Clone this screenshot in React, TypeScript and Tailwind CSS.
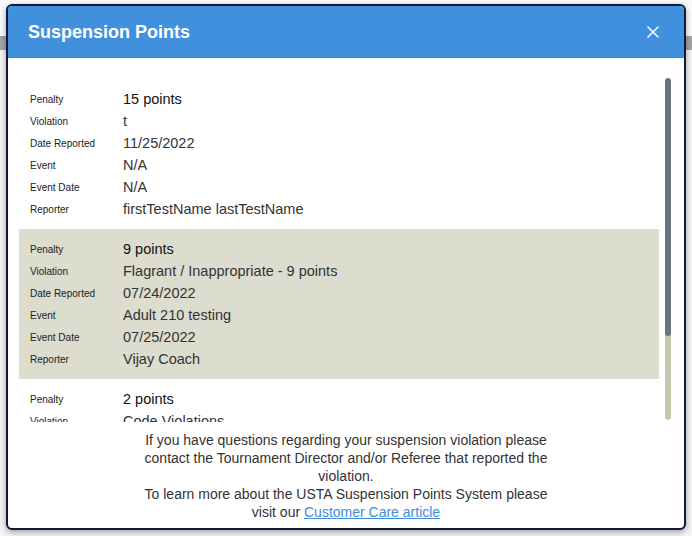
const entries = [
  {
    id: 1,
    penalty: "15 points",
    violation: "t",
    reported: "11/25/2022",
    event: "N/A",
    eventDate: "N/A",
    reporter: "firstTestName lastTestName",
  },
  {
    id: 2,
    penalty: "9 points",
    violation: "Flagrant / Inappropriate - 9 points",
    reported: "07/24/2022",
    event: "Adult 210 testing",
    eventDate: "07/25/2022",
    reporter: "Vijay Coach",
  },
  {
    id: 3,
    penalty: "2 points",
    violation: "Code Violations",
    reported: "05/12/2022",
    event: "N/A",
    eventDate: "N/A",
    reporter: "Vijay Coach",
  },
];

function Row({ label, value, strong }: { label: string; value: string; strong?: boolean }) {
  return (
    <div className="flex h-[22px] items-center pt-[1px]">
      <span className="w-[93px] shrink-0 text-[10px] text-[#222]">{label}</span>
      <span className={strong ? "text-[14.5px] font-medium text-[#111]" : "text-[14.5px] text-[#333]"}>
        {value}
      </span>
    </div>
  );
}

export default function App() {
  return (
    <div className="relative h-[536px] w-[692px] overflow-hidden bg-[#f5f5f5] font-['Liberation_Sans',Arial,sans-serif]">
      {/* page behind the modal */}
      <div className="h-[36px] bg-[#fafafa]" />
      <div className="h-[14px] bg-[#a3a3a3]" />
      <div className="h-[486px] bg-[#f3f3f3]" />

      <div className="absolute left-[6px] top-[4px] flex h-[526px] w-[680px] flex-col overflow-hidden rounded-[6px] border-2 border-[#0b1a3d] bg-white shadow-[0_2px_6px_rgba(0,0,0,0.35)]">
        <header className="flex h-[52px] shrink-0 items-center justify-between bg-[#4190dd] pl-[20px] pr-[25px]">
          <h2 className="text-[18px] font-bold text-white">Suspension Points</h2>
          <svg width="12" height="12" viewBox="0 0 12 12" className="text-white">
            <path d="M1 1L11 11M11 1L1 11" stroke="currentColor" strokeWidth="1.5" strokeLinecap="round" />
          </svg>
        </header>

        <div className="relative h-[364px] shrink-0 overflow-hidden">
          <div className="pl-[11px] pr-[25px] pt-[21px]">
            {entries.map((e, i) => (
              <div
                key={e.id}
                className={i % 2 === 1 ? "bg-[#dcdccf] px-[11px] py-[9px]" : "px-[11px] py-[9px]"}
              >
                <Row label="Penalty" value={e.penalty} strong />
                <Row label="Violation" value={e.violation} />
                <Row label="Date Reported" value={e.reported} />
                <Row label="Event" value={e.event} />
                <Row label="Event Date" value={e.eventDate} />
                <Row label="Reporter" value={e.reporter} />
              </div>
            ))}
          </div>
          {/* scrollbar */}
          <div className="absolute right-[13px] top-[20px] flex h-[342px] w-[6px] flex-col overflow-hidden rounded-full bg-[#c6c8ae]">
            <div className="h-[258px] rounded-full bg-[#69757e]" />
          </div>
        </div>

        <div className="flex flex-1 justify-center pt-[9px]">
          <p className="w-[430px] text-center text-[14px] leading-[18px] text-[#333]">
            If you have questions regarding your suspension violation please contact the Tournament
            Director and/or Referee that reported the violation.
            <br />
            To learn more about the USTA Suspension Points System please visit our{" "}
            <a className="text-[#3d8ede] underline" href="#">
              Customer Care article
            </a>
          </p>
        </div>
      </div>
    </div>
  );
}
